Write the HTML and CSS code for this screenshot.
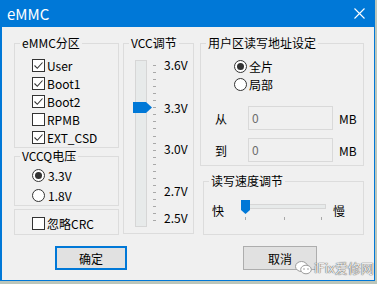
FILE: index.html
```html
<!DOCTYPE html>
<html>
<head>
  <meta charset="UTF-8">
  <title>eMMC</title>
  <link rel="stylesheet" href="styles.css">
</head>
<body>
  <div class="window">
    <div class="titlebar">
      <span class="title">eMMC</span>
      <svg class="close" width="11" height="11" viewBox="0 0 11 11">
        <path d="M0.5 0.5L10.5 10.5M10.5 0.5L0.5 10.5" stroke="#fff" stroke-width="1.1"/>
      </svg>
    </div>
    <div class="client">
      <div class="columns">
        <div class="col-left">
          <fieldset class="group g-part">
            <legend>eMMC分区</legend>
            <label class="check"><span class="box"><svg width="11" height="11" viewBox="0 0 11 11"><path d="M1.5 5.5L4.3 8.3L9.5 2.5" fill="none" stroke="#333" stroke-width="1.1"/></svg></span>User</label>
            <label class="check"><span class="box"><svg width="11" height="11" viewBox="0 0 11 11"><path d="M1.5 5.5L4.3 8.3L9.5 2.5" fill="none" stroke="#333" stroke-width="1.1"/></svg></span>Boot1</label>
            <label class="check"><span class="box"><svg width="11" height="11" viewBox="0 0 11 11"><path d="M1.5 5.5L4.3 8.3L9.5 2.5" fill="none" stroke="#333" stroke-width="1.1"/></svg></span>Boot2</label>
            <label class="check"><span class="box"></span>RPMB</label>
            <label class="check"><span class="box"><svg width="11" height="11" viewBox="0 0 11 11"><path d="M1.5 5.5L4.3 8.3L9.5 2.5" fill="none" stroke="#333" stroke-width="1.1"/></svg></span>EXT_CSD</label>
          </fieldset>
          <fieldset class="group g-vccq">
            <legend>VCCQ电压</legend>
            <label class="radio tall"><span class="dot on"></span>3.3V</label>
            <label class="radio tall"><span class="dot"></span>1.8V</label>
          </fieldset>
          <div class="group g-crc">
            <label class="check"><span class="box"></span>忽略CRC</label>
          </div>
        </div>

        <fieldset class="group g-vcc">
          <legend>VCC调节</legend>
          <div class="vslider">
            <svg width="26" height="170" viewBox="0 0 26 170">
              <rect x="2.5" y="0.5" width="11" height="166" fill="#e7eaea" stroke="#d6d6d6"/>
              <path d="M20 5.5h3M20 12.5h3M20 19.5h3M20 26.5h3M20 33.5h3M20 40.5h3M20 47.5h3M20 54.5h3M20 61.5h3M20 68.5h3M20 76.5h3M20 83.5h3M20 90.5h3M20 97.5h3M20 104.5h3M20 111.5h3M20 118.5h3M20 125.5h3M20 132.5h3M20 139.5h3M20 146.5h3M20 153.5h3M20 160.5h3" stroke="#a8a8a8" stroke-width="1"/>
              <polygon points="0,42 13,42 19,47.5 13,53 0,53" fill="#0078d7"/>
            </svg>
            <span class="vlabel" style="top:-2px">3.6V</span>
            <span class="vlabel" style="top:41px">3.3V</span>
            <span class="vlabel" style="top:82px">3.0V</span>
            <span class="vlabel" style="top:124px">2.7V</span>
            <span class="vlabel" style="top:151px">2.5V</span>
          </div>
        </fieldset>

        <div class="col-right">
          <fieldset class="group g-addr">
            <legend>用户区读写地址设定</legend>
            <div class="radios">
              <label class="radio"><span class="dot on"></span>全片</label>
              <label class="radio"><span class="dot"></span>局部</label>
            </div>
            <div class="addr-row first">
              <span class="addr-label">从</span>
              <span class="field">0</span>
              <span class="unit">MB</span>
            </div>
            <div class="addr-row">
              <span class="addr-label">到</span>
              <span class="field">0</span>
              <span class="unit">MB</span>
            </div>
          </fieldset>
          <fieldset class="group g-speed">
            <legend>读写速度调节</legend>
            <div class="speed-row">
              <span>快</span>
              <svg class="hslider" width="87" height="22" viewBox="0 0 87 22">
                <rect x="2.5" y="5.5" width="83" height="4" fill="#e7eaea" stroke="#d6d6d6"/>
                <path d="M5.5 18v3M44.5 18v3M81.5 18v3" stroke="#a8a8a8" stroke-width="1"/>
                <polygon points="1,1 10,1 10,11 5.5,15 1,11" fill="#0078d7"/>
              </svg>
              <span class="slow">慢</span>
            </div>
          </fieldset>
        </div>
      </div>

      <div class="buttons">
        <button class="btn btn-ok">确定</button>
        <button class="btn btn-cancel">取消</button>
      </div>
    </div>

    <!-- watermark from the screenshot source -->
    <div class="watermark">
      <svg width="17" height="14" viewBox="0 0 17 14">
        <ellipse cx="6.5" cy="5.5" rx="6" ry="5" fill="#fff" stroke="#9a9a9a"/>
        <ellipse cx="11" cy="8.5" rx="5.3" ry="4.3" fill="#fff" stroke="#9a9a9a"/>
        <circle cx="9" cy="8" r="0.8" fill="#9a9a9a"/>
        <circle cx="13" cy="8" r="0.8" fill="#9a9a9a"/>
      </svg>
      <span>iFix爱修网</span>
    </div>
  </div>
</body>
</html>
```

FILE: styles.css
```css
* {
  box-sizing: border-box;
}
body {
  margin: 0;
  background-color: #bcc6bb;
  font-family: "Noto Sans CJK SC", "Noto Sans", sans-serif;
  font-size: 12px;
  color: #000;
}
.window {
  position: relative;
  width: 375px;
  height: 281px;
  background-color: #f0f0f0;
}
.titlebar {
  height: 27px;
  padding: 0 10px 0 7px;
  background-color: #0078d7;
  color: #fff;
  display: flex;
  align-items: center;
  justify-content: space-between;
}
.title {
  font-size: 15px;
  line-height: 27px;
}
.client {
  height: 254px;
  padding: 8px 0 0 12px;
  border: 1px solid #0078d7;
  border-top: 0;
  border-left-width: 2px;
}
.columns {
  height: 200px;
  display: flex;
  align-items: flex-start;
}
.col-left {
  width: 105px;
  margin-right: 4px;
  display: flex;
  flex-direction: column;
}
.col-right {
  width: 164px;
  display: flex;
  flex-direction: column;
}
/* legends sit inside the padding box, so groups keep no side padding */
.group {
  margin: 0;
  padding: 0;
  min-width: 0;
  border: 1px solid #dcdcdc;
}
.group legend {
  margin-left: 5px;
  padding: 0 2px;
  line-height: 16px;
}

/* checkboxes and radios */
.check, .radio {
  height: 18px;
  display: flex;
  align-items: center;
  gap: 2px;
}
.radio.tall {
  height: 20px;
  gap: 3px;
}
.box {
  width: 13px;
  height: 13px;
  border: 1px solid #333;
  background-color: #fff;
  display: flex;
  align-items: center;
  justify-content: center;
}
.dot {
  width: 13px;
  height: 13px;
  border: 1px solid #333;
  border-radius: 50%;
  background-color: #fff;
  display: flex;
  align-items: center;
  justify-content: center;
}
.dot.on::after {
  content: "";
  width: 7px;
  height: 7px;
  border-radius: 50%;
  background-color: #333;
}

.g-part {
  height: 113px;
  padding-top: 5px;
}
.g-vccq {
  height: 58px;
  padding-top: 1px;
}
.g-part .check, .g-vccq .radio, .g-crc .check {
  margin-left: 17px;
}
.g-crc {
  height: 26px;
  margin-top: 3px;
  padding-top: 4px;
}

/* vcc slider */
.g-vcc {
  width: 71px;
  height: 199px;
  margin-right: 6px;
  padding-top: 9px;
}
.vslider {
  position: relative;
  height: 170px;
  margin-left: 9px;
}
.vslider svg {
  display: block;
}
.vlabel {
  position: absolute;
  left: 31px;
  line-height: 14px;
}

/* address */
.g-addr {
  height: 131px;
  padding-top: 6px;
}
.radios {
  padding-left: 33px;
}
.addr-row {
  height: 24px;
  margin-top: 8px;
  padding-left: 14px;
  display: flex;
  align-items: center;
}
.addr-row.first {
  margin-top: 13px;
}
.addr-label {
  width: 33px;
}
.field {
  width: 85px;
  height: 24px;
  padding-left: 3px;
  border: 1px solid #d9d9d9;
  background-color: #f0f0f0;
  color: #6d6d6d;
  line-height: 21px;
}
.unit {
  margin-left: 6px;
}

/* speed */
.g-speed {
  width: 161px;
  height: 62px;
  margin: 7px 0 0 3px;
  padding-top: 10px;
}
.speed-row {
  height: 22px;
  padding-left: 8px;
  display: flex;
  align-items: center;
}
.hslider {
  margin-left: 16px;
  display: block;
}
.slow {
  margin-left: 6px;
}

/* buttons */
.buttons {
  margin-top: 11px;
  padding-left: 41px;
  display: flex;
}
.btn {
  height: 24px;
  padding: 0;
  border: 1px solid #adadad;
  background-color: #e1e1e1;
  font: inherit;
  color: #000;
  display: flex;
  align-items: center;
  justify-content: center;
}
.btn-ok {
  width: 72px;
  border: 2px solid #0078d7;
}
.btn-cancel {
  width: 74px;
  margin-left: 116px;
}

.watermark {
  position: absolute;
  left: 295px;
  top: 258px;
  display: flex;
  align-items: center;
  gap: 2px;
  font-size: 13px;
  color: rgba(255, 255, 255, 0.9);
  text-shadow: 0 0 1px #555, 0 0 1px #555;
}
```
